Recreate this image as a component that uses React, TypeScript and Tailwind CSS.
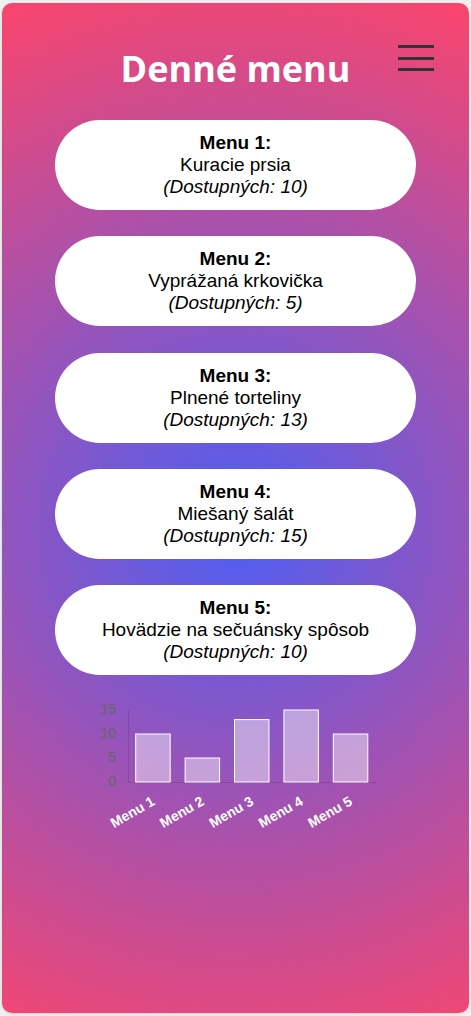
const MENUS = [
  { name: "Kuracie prsia", count: 10 },
  { name: "Vyprážaná krkovička", count: 5 },
  { name: "Plnené torteliny", count: 13 },
  { name: "Miešaný šalát", count: 15 },
  { name: "Hovädzie na sečuánsky spôsob", count: 10 },
];

function Chart() {
  const base = 82;
  const unit = 4.8;
  const step = 49.4;
  return (
    <svg width="290" height="140" viewBox="0 0 290 140" className="mx-auto block">
      {[15, 10, 5, 0].map((v) => (
        <text
          key={v}
          x="25"
          y={base - v * unit}
          textAnchor="end"
          dominantBaseline="middle"
          fontFamily="Liberation Sans, Arial, sans-serif"
          fontSize="14"
          fill="#666"
        >
          {v}
        </text>
      ))}
      <line x1="37.5" y1="10" x2="37.5" y2={base} stroke="rgba(0,0,0,0.12)" />
      <line x1="37" y1={base + 0.5} x2="285" y2={base + 0.5} stroke="rgba(0,0,0,0.12)" />
      {MENUS.map((m, i) => {
        const cx = 37 + step * (i + 0.5);
        const h = m.count * unit;
        const tx = cx + 3;
        const ty = base + 22;
        return (
          <g key={i}>
            <rect
              x={cx - 17}
              y={base - h}
              width="34.5"
              height={h}
              fill="rgba(255,255,255,0.45)"
              stroke="#fff"
              strokeWidth="1"
            />
            <text
              x={tx}
              y={ty}
              textAnchor="end"
              fontFamily="Liberation Sans, Arial, sans-serif"
              fontWeight="bold"
              fontSize="14"
              fill="#fff"
              transform={`rotate(-30 ${tx} ${ty})`}
            >
              Menu {i + 1}
            </text>
          </g>
        );
      })}
    </svg>
  );
}

export default function App() {
  return (
    <div className="min-h-screen bg-[#efefef] px-[2px] pt-[3px]">
      <div className="relative h-[1010px] overflow-hidden rounded-[10px] bg-[radial-gradient(circle_at_50%_52%,#4c5ff4_0%,#fb456c_100%)] shadow-[0_1px_3px_rgba(0,0,0,0.15)]">
        {/* hamburger */}
        <div className="absolute right-[35px] top-[42px] flex w-[36px] flex-col gap-[8.5px]">
          <span className="h-[3px] bg-[#333]" />
          <span className="h-[3px] bg-[#333]" />
          <span className="h-[3px] bg-[#333]" />
        </div>

        <h1 className="pt-[42px] text-center font-['Open_Sans',sans-serif] text-[36px] font-bold leading-[48px] text-white">
          Denné menu
        </h1>

        <div className="mt-[27px] flex flex-col items-center gap-[26.3px]">
          {MENUS.map((m, i) => (
            <div
              key={i}
              className="flex h-[90px] w-[361px] flex-col items-center justify-center rounded-full bg-white text-center font-['Liberation_Sans',Arial,sans-serif] text-[19px] leading-[22px] text-black"
            >
              <div className="font-bold">Menu {i + 1}:</div>
              <div>{m.name}</div>
              <div className="italic">(Dostupných: {m.count})</div>
            </div>
          ))}
        </div>

        <div className="mt-[25px]">
          <Chart />
        </div>
      </div>
    </div>
  );
}
